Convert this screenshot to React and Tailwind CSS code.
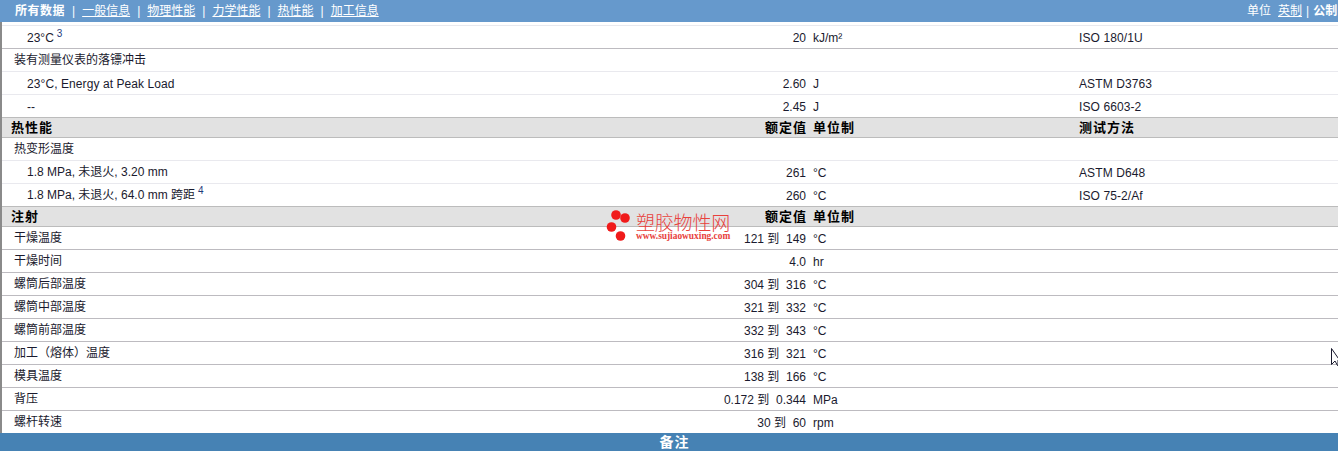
import React from 'react';

const font = "font-['Liberation_Sans','Noto_Sans_CJK_SC',sans-serif]";

function Row({ name, sup, value, unit, method, indent, latin, short, line = 'border-[#bdbbc0]' }) {
  return (
    <div className={`grid grid-cols-[804px_273px_1fr] items-center border-b ${short ? 'h-[22px] pt-[2px]' : 'h-[23px]'} ${line} text-[12px] text-[#1a1a2e]`}>
      <div className={`flex justify-between items-center ${indent ? 'pl-[25px]' : 'pl-[12px]'}`}>
        <span className={latin ? 'pt-[1px]' : short ? 'mt-[-2px]' : ''}>
          {name}
          {sup && <sup className="ml-[3px] text-[10px] text-[#1f3a7a] top-[-5px]">{sup}</sup>}
        </span>
        <span className="pt-[1px]">{value}</span>
      </div>
      <div className="pl-[7px] pt-[1px]">{unit}</div>
      <div className="pt-[1px] tracking-[0.1px]">{method}</div>
    </div>
  );
}

function Head({ title, method }) {
  return (
    <div className="grid h-[21px] grid-cols-[804px_273px_1fr] items-center border-y border-[#bcbcbc] bg-[#e2e2e2] text-[13px] font-bold tracking-[1px] text-black">
      <div className="flex justify-between pl-[9px]">
        <span>{title}</span>
        <span className="mr-[-1px]">额定值</span>
      </div>
      <div className="pl-[7px]">单位制</div>
      <div>{method}</div>
    </div>
  );
}

const faint = 'border-[#e9e9ee]';

const inject = [
  ['干燥温度', '121 到  149', '°C'],
  ['干燥时间', '4.0', 'hr'],
  ['螺筒后部温度', '304 到  316', '°C'],
  ['螺筒中部温度', '321 到  332', '°C'],
  ['螺筒前部温度', '332 到  343', '°C'],
  ['加工（熔体）温度', '316 到  321', '°C'],
  ['模具温度', '138 到  166', '°C'],
  ['背压', '0.172 到  0.344', 'MPa'],
  ['螺杆转速', '30 到  60', 'rpm'],
];

export default function App() {
  return (
    <div className={`relative h-[451px] w-[1338px] overflow-hidden bg-white ${font}`}>
      <div className="flex h-[22px] items-center justify-between bg-[#6699cc] text-[12px] text-white">
        <div className="flex items-center pl-[15px]">
          <b className="tracking-[0.5px]">所有数据</b>
          <span className="mx-[7px]">|</span>
          <a className="underline">一般信息</a>
          <span className="mx-[7px]">|</span>
          <a className="underline">物理性能</a>
          <span className="mx-[7px]">|</span>
          <a className="underline">力学性能</a>
          <span className="mx-[7px]">|</span>
          <a className="underline">热性能</a>
          <span className="mx-[7px]">|</span>
          <a className="underline">加工信息</a>
        </div>
        <div className="flex w-[91px] shrink-0 items-center overflow-hidden whitespace-nowrap">
          <span>单位</span>
          <a className="ml-[7px] underline">英制</a>
          <span className="mx-[4px]">|</span>
          <b>公制</b>
        </div>
      </div>

      <div className="border-l-2 border-[#8a8a8a]">
        <div className={`h-[4px] border-b ${faint}`} />
        <Row name="23°C" sup="3" value="20" unit="kJ/m²" method="ISO 180/1U" indent latin />
        <Row name="装有测量仪表的落镖冲击" line={faint} />
        <Row name={<span className="tracking-[0.08px]">23°C, Energy at Peak Load</span>} value="2.60" unit="J" method="ASTM D3763" indent latin line={faint} />
        <Row name="--" value="2.45" unit="J" method="ISO 6603-2" indent latin short line="border-transparent" />
        <Head title="热性能" method="测试方法" />
        <Row name="热变形温度" line={faint} />
        <Row name="1.8 MPa, 未退火, 3.20 mm" value="261" unit="°C" method="ASTM D648" indent line={faint} />
        <Row name="1.8 MPa, 未退火, 64.0 mm 跨距" sup="4" value="260" unit="°C" method="ISO 75-2/Af" indent short line="border-transparent" />
        <Head title="注射" />
        {inject.map(([name, value, unit], i) => (
          <Row
            key={name}
            name={name}
            value={<span className="whitespace-pre">{value}</span>}
            unit={unit}
            short={i === inject.length - 1}
            line={i === inject.length - 1 ? 'border-transparent' : 'border-[#bdbbc0]'}
          />
        ))}
      </div>

      <div className="flex h-[18px] items-center justify-center bg-[#4682b4] pl-[11px] text-[14px] font-bold tracking-[1px] text-white">备注</div>

      {/* watermark */}
      <div className="absolute left-[606px] top-[208px] flex h-[36px] items-start">
        <svg width="30" height="34" viewBox="0 0 30 34" className="shrink-0">
          <circle cx="10" cy="7" r="4.8" fill="#f01a1a" />
          <circle cx="19" cy="10" r="4.8" fill="#f01a1a" />
          <circle cx="5.5" cy="19" r="4.8" fill="#f01a1a" />
          <circle cx="14.5" cy="28" r="4.8" fill="#f01a1a" />
        </svg>
        <div className="flex flex-col text-[#e8413c]">
          <span className="mt-[8px] whitespace-nowrap text-[19px] leading-[16px] font-light tracking-[-0.2px]">塑胶物性网</span>
          <span className="whitespace-nowrap font-['Liberation_Serif',serif] text-[9.4px] leading-[8px] font-bold">www.sujiaowuxing.com</span>
        </div>
      </div>

      {/* mouse pointer */}
      <svg className="absolute left-[1331px] top-[348px]" width="9" height="18" viewBox="0 0 9 18">
        <path d="M0.5 0.5V16.5L4 13L6.5 17.5H7V12H8.5Z" fill="#ffffff" stroke="#1a1a2e" strokeWidth="1" />
      </svg>
    </div>
  );
}
